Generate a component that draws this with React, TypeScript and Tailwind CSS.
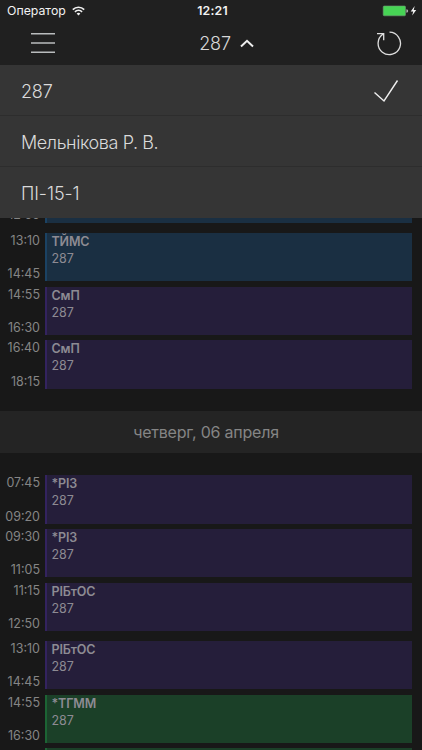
type Tone = 'blue' | 'purple' | 'green';

interface Lesson {
  start: string;
  end: string;
  title: string;
  tone: Tone;
  height: string;
  gap: string;
}

const tones: Record<Tone, string> = {
  blue: 'bg-[#1a2f42] border-[#1b4263]',
  purple: 'bg-[#251e3a] border-[#33235f]',
  green: 'bg-[#1b4028] border-[#1c6434]',
};

const wednesday: Lesson[] = [
  { start: '13:10', end: '14:45', title: 'ТЙМС', tone: 'blue', height: 'h-[48px]', gap: 'mt-[10px]' },
  { start: '14:55', end: '16:30', title: 'СмП', tone: 'purple', height: 'h-[48px]', gap: 'mt-[6px]' },
  { start: '16:40', end: '18:15', title: 'СмП', tone: 'purple', height: 'h-[49px]', gap: 'mt-[5px]' },
];

const thursday: Lesson[] = [
  { start: '07:45', end: '09:20', title: '*РІЗ', tone: 'purple', height: 'h-[49px]', gap: 'mt-[22px]' },
  { start: '09:30', end: '11:05', title: '*РІЗ', tone: 'purple', height: 'h-[48px]', gap: 'mt-[5px]' },
  { start: '11:15', end: '12:50', title: 'РІБтОС', tone: 'purple', height: 'h-[48px]', gap: 'mt-[6px]' },
  { start: '13:10', end: '14:45', title: 'РІБтОС', tone: 'purple', height: 'h-[48px]', gap: 'mt-[10px]' },
  { start: '14:55', end: '16:30', title: '*ТГММ', tone: 'green', height: 'h-[48px]', gap: 'mt-[6px]' },
];

const choices = [
  { label: '287', tracking: 'tracking-[-0.2px]' },
  { label: 'Мельнікова Р. В.', tracking: 'tracking-[-0.4px]' },
  { label: 'ПІ-15-1', tracking: 'tracking-[-0.1px]' },
];

function LessonRow({ lesson }: { lesson: Lesson }) {
  return (
    <div className={`flex shrink-0 pr-[10.5px] ${lesson.height} ${lesson.gap}`}>
      <div className="flex w-[45px] flex-col justify-between pr-[5px] text-right text-[12.5px] leading-[15px] text-[#858585]">
        <span>{lesson.start}</span>
        <span>{lesson.end}</span>
      </div>
      <div className={`flex-1 border-l-2 pl-[4.5px] text-[12.5px] text-[#8d8b93] ${tones[lesson.tone]}`}>
        <div className="h-[17px] font-semibold leading-[17px] tracking-[-0.15px]">{lesson.title}</div>
        <div className="h-[18px] leading-[18px]">287</div>
      </div>
    </div>
  );
}

function StatusBar() {
  return (
    <div className="flex h-[22px] items-center pl-[7px] pr-[4px] text-[12.3px] text-[#f2f2f2]">
      <div className="flex flex-1 items-center gap-[6px]">
        <span>Оператор</span>
        <svg width="13" height="10" viewBox="0 0 13 10" fill="none" stroke="#f2f2f2" strokeWidth="1.6">
          <path d="M0.8 3.6C4 0.4 9 0.4 12.2 3.6M2.9 5.8C5 3.8 8 3.8 10.1 5.8" />
          <path d="M6.5 9.5L4.6 7.5Q6.5 6 8.4 7.5Z" fill="#f2f2f2" stroke="none" />
        </svg>
      </div>
      <span className="font-semibold tracking-[0.2px]">12:21</span>
      <div className="flex flex-1 items-center justify-end">
        <svg width="36" height="12" viewBox="0 0 36 12">
          <rect x="1.2" y="1" width="22.3" height="9.8" rx="1" fill="#47d455" stroke="#6f9773" strokeWidth=".6" />
          <path d="M24.4 4.2Q26.2 4.5 26.2 6T24.4 7.8Z" fill="#b0b0b0" />
          <path d="M32.7 1L28.7 6.5H31.2L30.2 10.4L34.2 5H31.7Z" fill="#f5f5f5" />
        </svg>
      </div>
    </div>
  );
}

export default function App() {
  return (
    <div className="flex h-[750px] w-[422px] flex-col overflow-hidden bg-[#181818] font-['Inter','Noto_Sans',sans-serif]">
      <header className="h-[65px] shrink-0 bg-[#202020]">
        <StatusBar />
        <div className="flex h-[43px] items-center justify-between pl-[30px] pr-[19px]">
          <svg className="mb-[2px]" width="26" height="22" viewBox="0 0 26 22" stroke="#b9bcbd" strokeWidth="1.4">
            <path d="M1 1.8H25M1 11H25M1 20.2H25" />
          </svg>
          <div className="flex items-center gap-[9px] pl-[22px] text-[18px] font-light tracking-[-0.2px] text-[#d8d8d8]">
            <span>287</span>
            <svg width="14" height="9" viewBox="0 0 14 9" fill="none" stroke="#eeeeee" strokeWidth="2">
              <path d="M1 7.5L7 1.8L13 7.5" />
            </svg>
          </div>
          <svg className="mb-[2px]" width="28" height="26" viewBox="0 0 28 26" fill="none" stroke="#dedede" strokeWidth="1.3">
            <path d="M14.5 2.2A11.2 11.2 0 1 1 8.2 4M2 3.6H8.7V10.3" />
          </svg>
        </div>
      </header>

      <ul className="h-[153px] shrink-0 bg-[#353535] text-[18px] font-light text-[#dadada]">
        {choices.map((choice, i) => (
          <li
            key={choice.label}
            className="flex h-[51px] items-center justify-between border-b border-[#2d2d2d] pl-[21px] pr-[23px] pt-[2px] last:border-[#353535]"
          >
            <span className={choice.tracking}>{choice.label}</span>
            {i === 0 && (
              <svg width="26" height="24" viewBox="0 0 26 24" fill="none" stroke="#efefef" strokeWidth="1.4">
                <path d="M1.5 13.5L11 22L24.5 1.5" />
              </svg>
            )}
          </li>
        ))}
      </ul>

      <main className="flex min-h-0 flex-1 flex-col overflow-hidden">
        <div className="flex h-[5px] shrink-0 items-end overflow-hidden pr-[10.5px]">
          <div className="h-[8px] w-[45px] shrink-0 pr-[5px] text-right text-[12.5px] leading-[0px] text-[#858585]">12:50</div>
          <div className="h-full flex-1 border-l-2 border-[#1b4263] bg-[#1a2f42]" />
        </div>
        {wednesday.map((lesson) => (
          <LessonRow key={lesson.start} lesson={lesson} />
        ))}
        <h2 className="mt-[22px] flex h-[42px] shrink-0 items-center justify-center bg-[#242424] pr-[10px] text-[16px] tracking-[-0.22px] text-[#858585]">
          четверг, 06 апреля
        </h2>
        {thursday.map((lesson) => (
          <LessonRow key={lesson.start} lesson={lesson} />
        ))}
        <div className="mt-[5px] flex h-[10px] shrink-0 pl-[45px] pr-[10.5px]">
          <div className="flex-1 border-l-2 border-[#1c6434] bg-[#1b4028]" />
        </div>
      </main>
    </div>
  );
}
